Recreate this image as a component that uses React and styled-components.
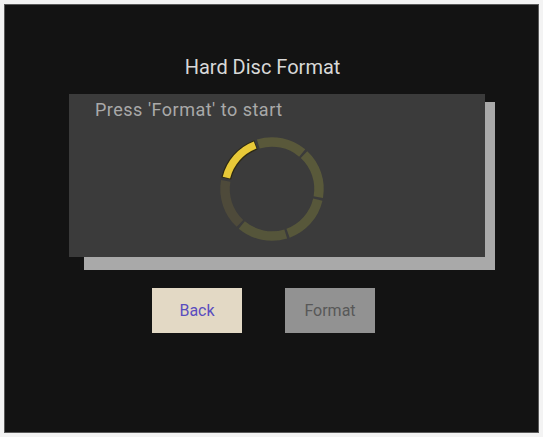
import React from "react";
import styled, { createGlobalStyle } from "styled-components";

const Global = createGlobalStyle`
  html, body { margin: 0; padding: 0; background: #f3f3f3; }
  body { font-family: Roboto, "Open Sans", sans-serif; }
`;

const Screen = styled.div`
  box-sizing: border-box;
  margin: 4px;
  width: 535px;
  height: 429px;
  background: #131313;
  border: 1px solid #5a5a5a;
  display: flex;
  flex-direction: column;
  align-items: flex-start;
  padding-top: 49px;
`;

const Title = styled.h1`
  margin: 0;
  width: 100%;
  box-sizing: border-box;
  padding-right: 18px;
  text-align: center;
  font-family: Roboto, "Open Sans", sans-serif;
  font-weight: 400;
  font-size: 20px;
  line-height: 26px;
  color: #d8d8d8;
`;

const Panel = styled.div`
  position: relative;
  z-index: 0;
  box-sizing: border-box;
  margin: 14px 0 0 64px;
  width: 416px;
  height: 163px;
  background: #3b3b3b;
  padding: 6px 0 0 26px;
  display: flex;
  flex-direction: column;
  &::before {
    content: "";
    position: absolute;
    z-index: -2;
    left: 15px;
    right: -10px;
    top: 8px;
    bottom: -13px;
    background: #a9a9a9;
  }
  &::after {
    content: "";
    position: absolute;
    z-index: -1;
    inset: 0;
    background: #3b3b3b;
  }
`;

const Message = styled.p`
  margin: 0;
  font-family: Roboto, "Open Sans", sans-serif;
  font-size: 18px;
  letter-spacing: 0.5px;
  line-height: 20px;
  color: #a9a9a9;
`;

const RingWrap = styled.div`
  margin: 14px 0 0 122px;
  width: 110px;
  height: 110px;
`;

const ButtonRow = styled.div`
  display: flex;
  gap: 43px;
  margin: 31px 0 0 147px;
`;

const Button = styled.button`
  width: 90px;
  height: 45px;
  border: none;
  padding: 0;
  font-family: Roboto, "Open Sans", sans-serif;
  font-size: 16px;
  background: ${(p) => (p.$active ? "#e3d9c5" : "#929292")};
  color: ${(p) => (p.$active ? "#5a4dbf" : "#585858")};
`;

const C = 55;
const R = 47;
const pt = (a) => {
  const r = (a * Math.PI) / 180;
  return [C + R * Math.cos(r), C - R * Math.sin(r)];
};
const arc = (a1, a2) => {
  const [x1, y1] = pt(a1);
  const [x2, y2] = pt(a2);
  return `M ${x1.toFixed(2)} ${y1.toFixed(2)} A ${R} ${R} 0 0 0 ${x2.toFixed(2)} ${y2.toFixed(2)}`;
};

const segments = [
  [50, 107, "#59583a"],
  [-10, 47, "#59593a"],
  [-70, -13, "#57573a"],
  [-130, -73, "#55553a"],
  [170, 227, "#4e4a3a"],
];

function Spinner() {
  return (
    <svg width="110" height="110" viewBox="0 0 110 110">
      {segments.map(([a, b, c], i) => (
        <path key={i} d={arc(a, b)} stroke={c} strokeWidth="9.5" fill="none" />
      ))}
      <path d={arc(110, 167)} stroke="#2e2a14" strokeWidth="10" fill="none" />
      <path d={arc(111, 166)} stroke="#e8c938" strokeWidth="7.5" fill="none" />
    </svg>
  );
}

export default function App() {
  return (
    <>
      <Global />
      <Screen>
        <Title>Hard Disc Format</Title>
        <Panel>
          <Message>Press 'Format' to start</Message>
          <RingWrap>
            <Spinner />
          </RingWrap>
        </Panel>
        <ButtonRow>
          <Button $active>Back</Button>
          <Button>Format</Button>
        </ButtonRow>
      </Screen>
    </>
  );
}
